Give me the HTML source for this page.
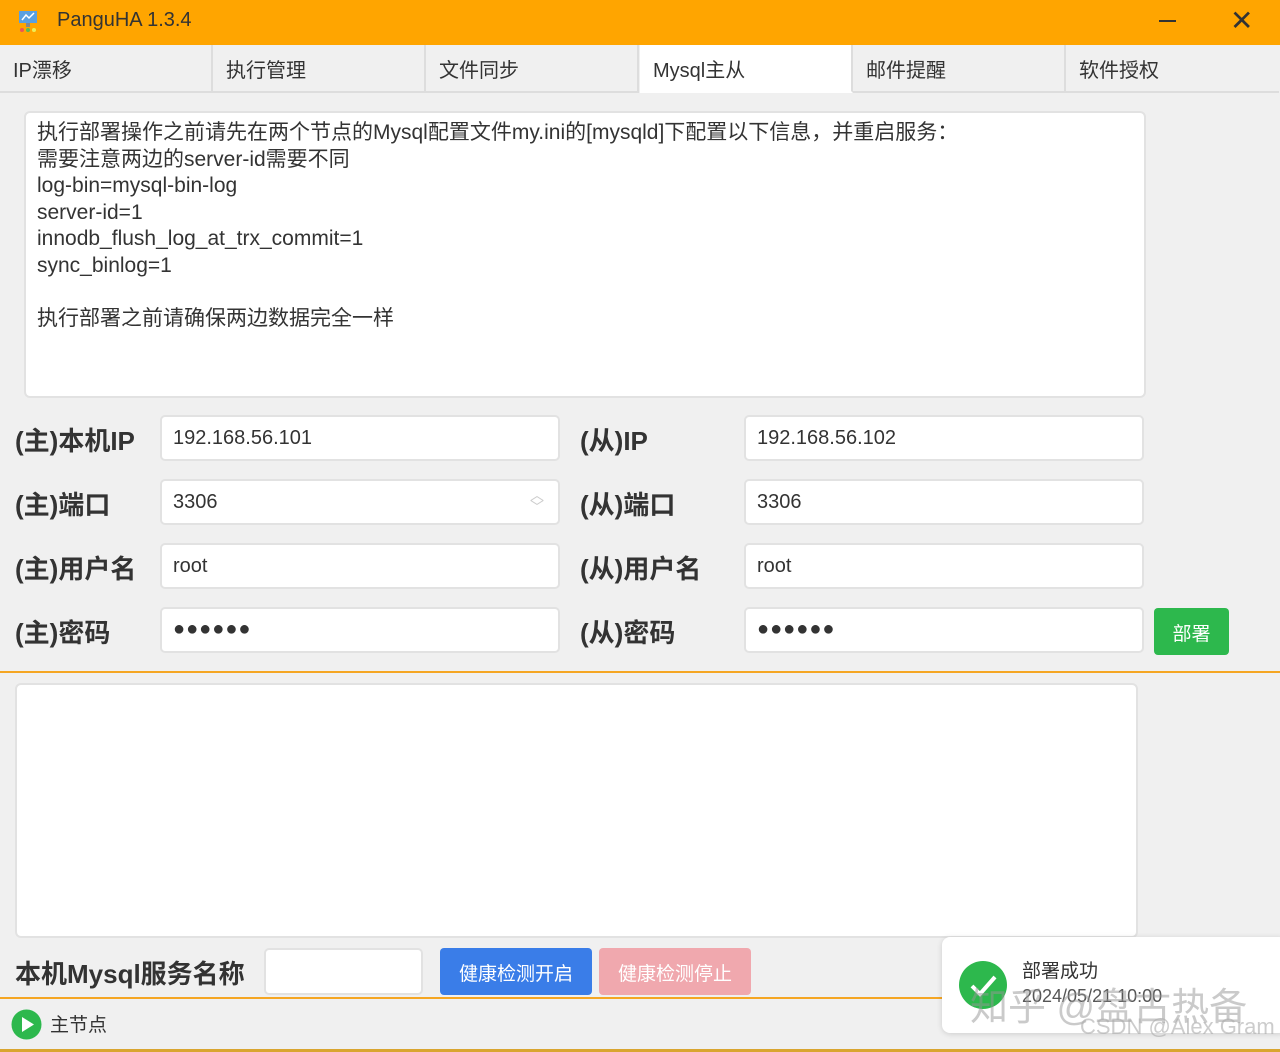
<!DOCTYPE html>
<html><head><meta charset="utf-8"><style>
*{box-sizing:border-box;margin:0;padding:0}
body{width:1280px;height:1052px;background:#f0f0f0;font-family:"Liberation Sans","Noto Sans CJK SC",sans-serif;position:relative;overflow:hidden;color:#222}
.a{position:absolute}
.title{left:0;top:0;width:1280px;height:45px;background:#ffa500}
.tab{top:45px;height:48px;width:213px;border-right:2px solid #ddd;border-bottom:2px solid #ddd;font-size:20px;padding:9px 0 0 13px;color:#333}
.box{background:#fff;border:2px solid #e2e2e2;border-radius:6px}
.lbl{font-size:26px;font-weight:bold;color:#333}
.inp{background:#fff;border:2px solid #e2e2e2;border-radius:5px;height:46px;font-size:20px;padding:10px 0 0 11px;color:#333}
.dots{font-size:20px;letter-spacing:1px;padding-top:9px;font-weight:bold}
.btn{border-radius:4px;color:#fff;font-size:19px;text-align:center}
</style></head><body>
<div class="a title"></div>
<svg class="a" style="left:18px;top:10px" width="22" height="24"><rect x="1" y="1" width="18" height="12" fill="#5aa0e0"/><path d="M4 10 L8 5 L11 8 L16 3" stroke="#fff" fill="none" stroke-width="1.5"/><rect x="8" y="13" width="4" height="4" fill="#888"/><circle cx="4" cy="20" r="2" fill="#e55"/><circle cx="10" cy="20" r="2" fill="#5b5"/><circle cx="16" cy="20" r="2" fill="#ee5"/></svg>
<div class="a" style="left:57px;top:9px;font-size:20px;color:#333">PanguHA 1.3.4</div>
<div class="a" style="left:1159px;top:20px;width:17px;height:2px;background:#333"></div>
<div class="a" style="left:1230px;top:4px;font-size:28px;color:#333">✕</div>
<div class="a tab" style="left:0">IP漂移</div>
<div class="a tab" style="left:213px">执行管理</div>
<div class="a tab" style="left:426px">文件同步</div>
<div class="a tab" style="left:640px;background:#fff;border-bottom-color:#fff">Mysql主从</div>
<div class="a tab" style="left:853px">邮件提醒</div>
<div class="a tab" style="left:1066px;border-right:none">软件授权</div>
<div class="a box" style="left:24px;top:111px;width:1122px;height:287px;padding:7px 11px;font-size:21px;line-height:26.5px;color:#333">执行部署操作之前请先在两个节点的Mysql配置文件my.ini的[mysqld]下配置以下信息，并重启服务：<br>需要注意两边的server-id需要不同<br>log-bin=mysql-bin-log<br>server-id=1<br>innodb_flush_log_at_trx_commit=1<br>sync_binlog=1<br><br>执行部署之前请确保两边数据完全一样</div>
<div class="a lbl" style="left:15px;top:421px">(主)本机IP</div>
<div class="a lbl" style="left:15px;top:485px">(主)端口</div>
<div class="a lbl" style="left:15px;top:549px">(主)用户名</div>
<div class="a lbl" style="left:15px;top:613px">(主)密码</div>
<div class="a lbl" style="left:580px;top:421px">(从)IP</div>
<div class="a lbl" style="left:580px;top:485px">(从)端口</div>
<div class="a lbl" style="left:580px;top:549px">(从)用户名</div>
<div class="a lbl" style="left:580px;top:613px">(从)密码</div>
<div class="a inp" style="left:160px;top:415px;width:400px">192.168.56.101</div>
<div class="a inp" style="left:160px;top:479px;width:400px">3306<span style="position:absolute;right:14px;top:8px;color:#ccc;font-size:14px;line-height:12px">︿<br>﹀</span></div>
<div class="a inp" style="left:160px;top:543px;width:400px">root</div>
<div class="a inp dots" style="left:160px;top:607px;width:400px">●●●●●●</div>
<div class="a inp" style="left:744px;top:415px;width:400px">192.168.56.102</div>
<div class="a inp" style="left:744px;top:479px;width:400px">3306</div>
<div class="a inp" style="left:744px;top:543px;width:400px">root</div>
<div class="a inp dots" style="left:744px;top:607px;width:400px">●●●●●●</div>
<div class="a btn" style="left:1154px;top:608px;width:75px;height:47px;background:#2db84d;padding-top:11px">部署</div>
<div class="a" style="left:0;top:671px;width:1280px;height:2px;background:#f5a623"></div>
<div class="a box" style="left:15px;top:683px;width:1123px;height:255px"></div>
<div class="a lbl" style="left:15px;top:954px">本机Mysql服务名称</div>
<div class="a inp" style="left:264px;top:948px;width:159px;height:47px"></div>
<div class="a btn" style="left:440px;top:948px;width:152px;height:47px;background:#3a7de8;padding-top:11px">健康检测开启</div>
<div class="a btn" style="left:599px;top:948px;width:152px;height:47px;background:#f0a8ae;padding-top:11px">健康检测停止</div>
<div class="a" style="left:0;top:997px;width:1280px;height:2px;background:#f5a623"></div>
<div class="a" style="left:0;top:1049px;width:1280px;height:3px;background:#d9a530"></div>
<svg class="a" style="left:10px;top:1008px" width="33" height="33"><circle cx="16.5" cy="16.5" r="15" fill="#2db84d"/><path d="M12 9 L24 16.5 L12 24Z" fill="#fff"/></svg>
<div class="a" style="left:50px;top:1010px;font-size:19px;color:#333">主节点</div>
<div class="a" style="left:942px;top:937px;width:345px;height:96px;background:#fff;border-radius:8px;box-shadow:0 1px 6px rgba(0,0,0,.15)"></div>
<svg class="a" style="left:958px;top:960px" width="50" height="50"><circle cx="25" cy="25" r="24" fill="#2db84d"/><path d="M14 26 L22 34 L37 17" stroke="#fff" stroke-width="4" fill="none"/></svg>
<div class="a" style="left:1022px;top:956px;font-size:19px;color:#333">部署成功</div>
<div class="a" style="left:1022px;top:986px;font-size:18px;color:#555">2024/05/21 10:00</div>
<div class="a" style="left:970px;top:976px;font-size:38px;color:rgba(150,150,150,.5)">知乎 @盘古热备</div>
<div class="a" style="left:1080px;top:1014px;font-size:22px;color:rgba(170,170,170,.6)">CSDN @Alex Gram</div>
</body></html>
